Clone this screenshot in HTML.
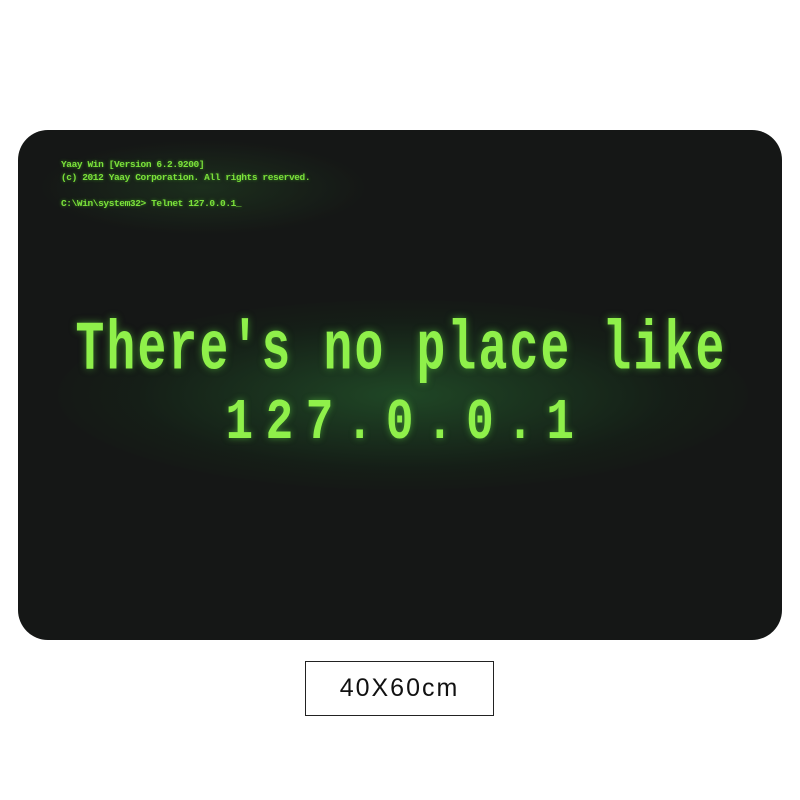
<!DOCTYPE html>
<html><head><style>
html,body{margin:0;padding:0;background:#fff;width:800px;height:800px;overflow:hidden;position:relative;font-family:"Liberation Sans",sans-serif}
.mat{position:absolute;left:18px;top:130px;width:764px;height:510px;border-radius:30px;background:#151716;overflow:hidden}
.glow{position:absolute;left:40px;top:170px;width:690px;height:190px;border-radius:50%;background:radial-gradient(ellipse at center,rgba(40,110,50,.55),rgba(20,50,25,.25) 55%,rgba(0,0,0,0) 75%)}
.glow2{position:absolute;left:20px;top:10px;width:330px;height:95px;border-radius:50%;background:radial-gradient(ellipse at center,rgba(40,90,40,.35),rgba(0,0,0,0) 70%)}
.term{position:absolute;left:43px;top:28px;color:#7be03a;font-family:"Liberation Mono",monospace;font-weight:bold;font-size:9.5px;line-height:13px;letter-spacing:-.4px;text-shadow:0 0 3px #3c8a22}
.big{position:absolute;left:0;width:764px;text-align:center;color:#8ff04a;font-family:"Liberation Mono",monospace;font-weight:bold;text-shadow:0 0 6px rgba(90,200,60,.6);white-space:nowrap}
.l1{top:194px;font-size:48px;letter-spacing:2.2px;transform:scaleY(1.45);left:1px}
.l2{top:267px;font-size:46px;letter-spacing:12.5px;transform:scaleY(1.25);left:6px}
.label{position:absolute;left:305px;top:661px;width:189px;height:55px;border:1.5px solid #222;box-sizing:border-box;text-align:center;line-height:53px;font-size:25px;color:#111;letter-spacing:2px}
</style></head><body>
<div class="mat">
<div class="glow"></div><div class="glow2"></div>
<div class="term">Yaay Win [Version 6.2.9200]<br>(c) 2012 Yaay Corporation. All rights reserved.<br><br>C:\Win\system32&gt; Telnet 127.0.0.1_</div>
<div class="big l1">There's no place like</div>
<div class="big l2">127.0.0.1</div>
</div>
<div class="label">40X60cm</div>
</body></html>
